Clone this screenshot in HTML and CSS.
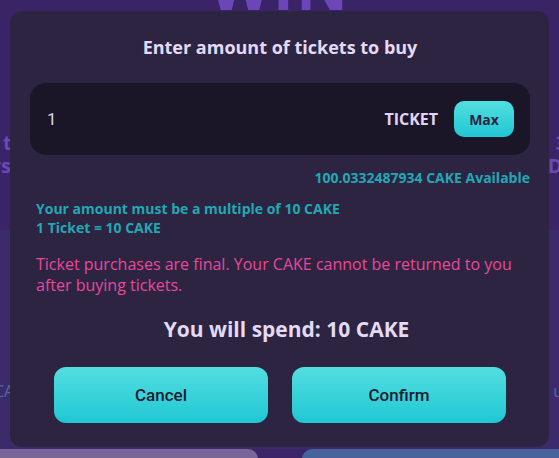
FILE: index.html
```html
<!DOCTYPE html>
<html>
<head>
<meta charset="utf-8">
<link rel="stylesheet" href="styles.css">
</head>
<body>
<div class="page">
  <div class="bg-top">
    <div class="bg-win">WIN</div>
    <div class="bg-row bg-row1"><span>t</span><span>3</span></div>
    <div class="bg-row bg-row2"><span>rs</span><span>Do</span></div>
  </div>
  <div class="bg-mid">
    <div class="bg-row bg-row3"><span>CA</span><span>u</span></div>
  </div>
  <div class="bg-bottom">
    <div class="bg-card left"></div>
    <div class="bg-card right"></div>
  </div>

  <div class="modal">
    <h2 class="title">Enter amount of tickets to buy</h2>
    <div class="input-box">
      <span class="value">1</span>
      <span class="unit">TICKET</span>
      <button class="max">Max</button>
    </div>
    <div class="available">100.0332487934 CAKE Available</div>
    <div class="info">
      <div>Your amount must be a multiple of 10 CAKE</div>
      <div>1 Ticket = 10 CAKE</div>
    </div>
    <p class="warning">Ticket purchases are final. Your CAKE cannot be returned to you after buying tickets.</p>
    <div class="spend">You will spend: 10 CAKE</div>
    <div class="actions">
      <button class="btn">Cancel</button>
      <button class="btn">Confirm</button>
    </div>
  </div>
</div>
</body>
</html>
```

FILE: styles.css
```css
* { box-sizing: border-box; }
html, body { margin: 0; padding: 0; }
body {
  width: 559px;
  height: 458px;
  overflow: hidden;
  background: #3b2467;
  font-family: "Open Sans", "Noto Sans", sans-serif;
}
.page {
  position: relative;
  width: 559px;
  height: 458px;
  display: flex;
  flex-direction: column;
}
.bg-top {
  height: 230px;
  background: #3a2366;
  position: relative;
}
.bg-win {
  text-align: center;
  font-size: 64px;
  font-weight: 700;
  color: #6b46b6;
  line-height: 1;
  margin-top: -46px;
  letter-spacing: 2px;
}
.bg-row {
  display: flex;
  justify-content: space-between;
  font-weight: 700;
  font-size: 20px;
  color: #6a48b8;
}
.bg-row1 { margin-top: 111px; padding: 0 0 0 3px; }
.bg-row1 span:last-child { margin-right: -8px; }
.bg-row2 { margin-top: -4px; margin-left: -8px; }
.bg-row2 span:last-child { margin-right: -16px; }
.bg-mid {
  flex: 1;
  background: #3d2a6b;
}
.bg-row3 {
  margin-top: 150px;
  font-weight: 400;
  font-size: 16px;
  color: #4a6aa8;
  margin-left: -6px;
  margin-right: -4px;
}
.bg-bottom {
  height: 9px;
  display: flex;
  justify-content: space-between;
  background: #3b2467;
}
.bg-card {
  height: 20px;
  border-radius: 10px 10px 0 0;
}
.bg-card.left { width: 258px; background: #7a6699; border-top-left-radius: 0; }
.bg-card.right { width: 257px; background: #48639b; border-top-right-radius: 0; }

.modal {
  position: absolute;
  left: 10px;
  top: 11px;
  width: 539px;
  height: 436px;
  background: #2c2441;
  border-radius: 12px;
  padding: 24px 19px 0 20px;
  display: flex;
  flex-direction: column;
}
.title {
  margin: 0;
  text-align: center;
  font-size: 18px;
  line-height: 24px;
  font-weight: 700;
  color: #e3daf5;
}
.input-box {
  margin-top: 24px;
  height: 72px;
  background: #1b1627;
  border-radius: 16px;
  display: flex;
  align-items: center;
  padding: 0 16px 0 17px;
}
.value {
  flex: 1;
  font-family: Roboto, "Liberation Sans", sans-serif;
  font-size: 17px;
  color: #dcd2f2;
}
.unit {
  font-weight: 700;
  font-size: 16px;
  color: #e0d6f4;
  margin-right: 16px;
}
.max {
  width: 60px;
  height: 36px;
  border: none;
  border-radius: 10px;
  background: linear-gradient(#53dee0, #1fc7d4);
  font-family: "Open Sans", sans-serif;
  font-weight: 700;
  font-size: 14px;
  color: #2b2644;
  padding: 0;
}
.available {
  margin-top: 14px;
  text-align: right;
  font-size: 14px;
  line-height: 18px;
  font-weight: 700;
  color: #22a8b4;
}
.info {
  margin-top: 12px;
  padding-left: 6px;
  font-size: 14px;
  line-height: 19px;
  font-weight: 700;
  color: #22a8b4;
}
.warning {
  margin: 17px 0 0;
  padding-left: 6px;
  font-size: 16px;
  line-height: 21px;
  color: #e9489b;
}
.spend {
  margin-top: 20px;
  padding-left: 13px;
  text-align: center;
  font-size: 21px;
  line-height: 26px;
  font-weight: 700;
  color: #e3daf5;
}
.actions {
  margin-top: 25px;
  display: flex;
  justify-content: center;
  gap: 24px;
}
.btn {
  width: 214px;
  height: 56px;
  border: none;
  border-radius: 12px;
  background: linear-gradient(#53dee0, #1fc7d4);
  font-family: Roboto, "Liberation Sans", sans-serif;
  font-weight: 500;
  font-size: 17px;
  color: #1d1b2e;
}
```
